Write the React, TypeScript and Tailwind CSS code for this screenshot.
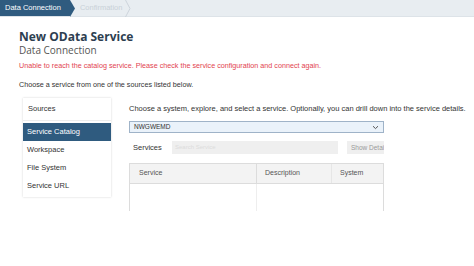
import React from "react"

const sources = ["Service Catalog", "Workspace", "File System", "Service URL"]

function Header() {
  return (
    <div className="flex h-[17px] items-stretch bg-[#e8edf1] border-b border-[#dde3e8]">
      <div className="relative flex items-center bg-[#2f5b7f] pl-[5px] pr-[9px] text-[7.5px] text-white">
        Data Connection
        <svg className="absolute -right-[5px] top-0" width="5" height="17" viewBox="0 0 5 17">
          <polygon points="0,0 5,8.5 0,17" fill="#2f5b7f" />
        </svg>
      </div>
      <div className="relative flex items-center pl-[10px] pr-[9px] text-[7.5px] text-[#c9d1d8]">
        Confirmation
        <svg className="absolute right-0 top-0" width="6" height="17" viewBox="0 0 6 17">
          <polyline points="0.5,0 5,8.5 0.5,17" fill="none" stroke="#c7ced5" strokeWidth="0.8" />
        </svg>
      </div>
      <div className="flex-1" />
    </div>
  )
}

function SourceList() {
  return (
    <div className="w-[88px] shrink-0 self-start bg-white shadow-[0_0_2px_rgba(0,0,0,0.18)]">
      <div className="flex h-[22px] items-center px-[5px] text-[7.5px] text-[#333]">Sources</div>
      <div className="border-t border-[#eee]" />
      <div className="pt-[2px] pb-[2px]">
        {sources.map((s, i) => (
          <div
            key={s}
            className={
              i === 0
                ? "flex h-[18px] items-center bg-[#2f5b7f] px-[4px] text-[7.5px] text-white"
                : "flex h-[18px] items-center px-[4px] text-[7.5px] text-[#333]"
            }
          >
            {s}
          </div>
        ))}
      </div>
    </div>
  )
}

function ServicePanel() {
  return (
    <div className="flex w-[255px] flex-col">
      <div className="flex h-[22px] items-center text-[7.5px] text-[#333] whitespace-nowrap">
        Choose a system, explore, and select a service. Optionally, you can drill down into the service details.
      </div>
      <div className="mt-[1px] flex h-[12px] items-center justify-between border border-[#9fb3c8] bg-[#eaf2fa] pl-[4px] pr-[4px] text-[6.5px] text-[#333]">
        <span>NWGWEMD</span>
        <svg width="7" height="5" viewBox="0 0 7 5">
          <polyline points="1,1.2 3.5,3.6 6,1.2" fill="none" stroke="#555" strokeWidth="1" />
        </svg>
      </div>
      <div className="mt-[8px] flex h-[13px] items-center">
        <span className="w-[43px] pl-[4px] text-[7.5px] text-[#333]">Services</span>
        <div className="flex h-[13px] w-[166px] items-center bg-[#efefef] px-[3px] text-[6px] text-[#dcdcdc]">
          Search Service
        </div>
        <div className="ml-[9px] flex h-[13px] flex-1 items-center overflow-hidden whitespace-nowrap bg-[#efefef] pl-[4px] text-[6.5px] text-[#9a9a9a]">
          Show Detai
        </div>
      </div>
      <div className="mt-[9px] border-x border-t border-[#dcdcdc]">
        <div className="flex h-[20px] border-b border-[#dcdcdc] bg-[#f3f3f3] text-[7px] text-[#555]">
          <div className="flex w-[127px] items-center border-r border-[#dcdcdc] pl-[9px]">Service</div>
          <div className="flex w-[75px] items-center border-r border-[#e6e6e6] pl-[8px]">Description</div>
          <div className="flex flex-1 items-center pl-[8px]">System</div>
        </div>
        <div className="flex h-[27px]">
          <div className="w-[127px] border-r border-[#eee]" />
          <div className="flex-1" />
        </div>
      </div>
    </div>
  )
}

export default function App() {
  return (
    <div className="h-[266px] w-[474px] overflow-hidden bg-white font-['Liberation_Sans',Arial,sans-serif]">
      <Header />
      <div className="px-[19px] pt-[12px]">
        <div className="font-['Open_Sans',sans-serif] text-[12px] font-bold leading-[15px] text-[#2d3e50]">
          New OData Service
        </div>
        <div className="font-['Open_Sans',sans-serif] text-[10px] leading-[12px] text-[#555]">
          Data Connection
        </div>
        <div className="mt-[5px] text-[7.2px] leading-[9px] text-[#e2434f]">
          Unable to reach the catalog service. Please check the service configuration and connect again.
        </div>
        <div className="mt-[10px] text-[7.2px] leading-[9px] text-[#333]">
          Choose a service from one of the sources listed below.
        </div>
        <div className="mt-[9px] flex gap-[18px] pl-[4px]">
          <SourceList />
          <ServicePanel />
        </div>
      </div>
    </div>
  )
}
